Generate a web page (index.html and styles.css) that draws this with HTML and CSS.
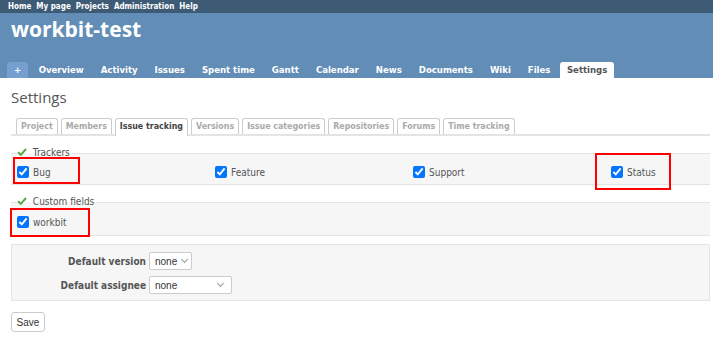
FILE: index.html
```html
<!DOCTYPE html>
<html>
<head>
<meta charset="utf-8">
<link rel="stylesheet" href="styles.css">
</head>
<body>
<div class="top-menu">
  <a>Home</a><a>My page</a><a>Projects</a><a>Administration</a><a>Help</a>
</div>
<div class="header">
  <h1 class="title">workbit-test</h1>
  <div class="main-menu">
    <a class="new">+</a><a>Overview</a><a>Activity</a><a>Issues</a><a>Spent time</a><a>Gantt</a><a>Calendar</a><a>News</a><a>Documents</a><a>Wiki</a><a>Files</a><a class="selected">Settings</a>
  </div>
</div>
<div class="content">
  <h2 class="page-title">Settings</h2>
  <div class="tabs">
    <a>Project</a><a>Members</a><a class="selected">Issue tracking</a><a>Versions</a><a>Issue categories</a><a>Repositories</a><a>Forums</a><a>Time tracking</a>
  </div>

  <fieldset class="box trackers">
    <legend><svg class="tick" width="10" height="8" viewBox="0 0 10 8"><path d="M1 4.2 L3.8 6.8 L9 1" fill="none" stroke="#5aa747" stroke-width="2"/></svg> Trackers</legend>
    <div class="grid">
      <label><input type="checkbox" checked> Bug</label>
      <label><input type="checkbox" checked> Feature</label>
      <label><input type="checkbox" checked> Support</label>
      <label><input type="checkbox" checked> Status</label>
    </div>
  </fieldset>

  <fieldset class="box custom">
    <legend><svg class="tick" width="10" height="8" viewBox="0 0 10 8"><path d="M1 4.2 L3.8 6.8 L9 1" fill="none" stroke="#5aa747" stroke-width="2"/></svg> Custom fields</legend>
    <div class="grid">
      <label><input type="checkbox" checked> workbit</label>
    </div>
  </fieldset>

  <div class="tabular">
    <p class="row"><span class="lbl">Default version</span><span class="select small">none <i class="chev"></i></span></p>
    <p class="row"><span class="lbl">Default assignee</span><span class="select wide">none <i class="chev"></i></span></p>
  </div>

  <button class="save">Save</button>

  <div class="mark m1"></div>
  <div class="mark m2"></div>
  <div class="mark m3"></div>
</div>
</body>
</html>
```
FILE: styles.css
```css
html, body { margin: 0; padding: 0; background: #fff; }
body { font-family: "DejaVu Sans Condensed", "DejaVu Sans", sans-serif; color: #555; overflow: hidden; }

.top-menu {
  background: #3e5b76;
  height: 13px;
  padding-left: 8px;
  display: flex;
  align-items: center;
  gap: 5px;
  font-size: 8px;
  font-weight: bold;
  color: #fff;
}

.header {
  background: #628db6;
  height: 65px;
  display: flex;
  flex-direction: column;
  justify-content: space-between;
  color: #fff;
}
.title {
  margin: 4px 0 0 11px;
  font-size: 21px;
  font-family: "Open Sans", "DejaVu Sans", sans-serif;
  font-weight: bold;
  line-height: 24px;
}
.main-menu {
  display: flex;
  padding-left: 7px;
  height: 16px;
  font-size: 9.5px;
  font-weight: bold;
}
.main-menu a {
  padding: 0 8.5px;
  line-height: 16px;
  border-radius: 3px 3px 0 0;
  color: #fff;
}
.main-menu a.new { background: #759fcf; padding: 0 7px; margin-right: 2px; }
.main-menu a.selected { background: #fff; color: #555; padding: 0 7px; margin-left: 1px; }

.content { position: relative; padding: 10px 3px 0 11px; }
.page-title {
  margin: 0;
  font-family: "Open Sans", "DejaVu Sans", sans-serif;
  font-weight: normal;
  font-size: 15px;
  line-height: 18px;
  color: #555;
}
.tabs {
  margin-top: 12px;
  display: flex;
  gap: 3px;
  padding-left: 5px;
  height: 16px;
  border-bottom: 2px solid #e4e4e4;
  font-size: 8.8px;
  font-weight: bold;
}
.tabs a {
  border: 1px solid #ccc;
  border-bottom: none;
  border-radius: 3px 3px 0 0;
  padding: 0 4px;
  line-height: 15px;
  color: #aaa;
  background: #fff;
}
.tabs a.selected { color: #444; height: 17px; }

.box {
  margin: 0;
  padding: 0 6px;
  border: none;
  border-top: 1px solid #e4e4e4;
  border-bottom: 1px solid #e4e4e4;
  background: #f6f6f6;
  min-width: 0;
}
.trackers { margin-top: 11px; height: 36px; }
.custom { margin-top: 11px; height: 38px; }
.box legend {
  padding: 0 2px 0 0;
  margin-left: 0;
  font-size: 10px;
  color: #555;
  line-height: 12px;
}
.tick { margin-right: 3px; vertical-align: 0; }
.grid {
  display: grid;
  grid-template-columns: 198px 198px 198px 1fr;
  padding-top: 7px;
  font-size: 10px;
}
.custom .grid { padding-top: 8px; }
.grid label { display: flex; align-items: center; gap: 4px; }
.grid input { margin: 0; width: 12px; height: 12px; }

.tabular {
  margin-top: 8px;
  background: #f6f6f6;
  border: 1px solid #e4e4e4;
  height: 57px;
  padding-top: 7px;
  box-sizing: border-box;
}
.row {
  margin: 0 0 6px;
  display: flex;
  align-items: center;
  font-size: 10px;
  font-weight: bold;
}
.lbl { width: 134px; text-align: right; padding-right: 3px; }
.select {
  box-sizing: border-box;
  height: 18px;
  background: #fff;
  border: 1px solid #ccc;
  border-radius: 2px;
  font-family: "Liberation Sans", Arial, sans-serif;
  font-weight: normal;
  font-size: 10px;
  color: #333;
  display: flex;
  align-items: center;
  justify-content: space-between;
  padding: 0 4px 0 5px;
}
.select.small { width: 43px; }
.select.wide { width: 83px; padding-right: 8px; }
.chev {
  width: 4px; height: 4px;
  border-right: 1px solid #999;
  border-bottom: 1px solid #999;
  transform: rotate(45deg);
  margin-top: -3px;
}
.save {
  margin-top: 11px;
  height: 20px;
  width: 34px;
  padding: 0;
  background: #fff;
  border: 1px solid #ccc;
  border-radius: 3px;
  font-family: "Liberation Sans", Arial, sans-serif;
  font-size: 10px;
  color: #333;
}

.mark { position: absolute; border: 2px solid #f00; box-sizing: border-box; }
.m1 { left: 13px; top: 79px; width: 67px; height: 27px; }
.m2 { left: 595px; top: 75px; width: 76px; height: 37px; }
.m3 { left: 10px; top: 130px; width: 80px; height: 29px; }
```
